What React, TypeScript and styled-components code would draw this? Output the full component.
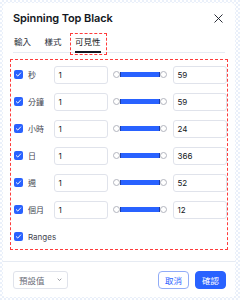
import styled, { createGlobalStyle } from 'styled-components';

const GlobalStyle = createGlobalStyle`
  html, body {
    margin: 0;
    padding: 0;
  }
  body {
    width: 240px;
    height: 300px;
    overflow: hidden;
    font-family: Inter, "Noto Sans CJK TC", sans-serif;
    color: #131722;
    background-color: #ffffff;
    background-image: repeating-conic-gradient(#eaf0fa 0 25%, #ffffff 0 50%);
    background-size: 4px 4px;
  }
`;

const Page = styled.div`
  padding: 3px;
`;

const Dialog = styled.div`
  width: 232px;
  height: 294px;
  background: #ffffff;
  border-radius: 4px;
  display: flex;
  flex-direction: column;
`;

const Header = styled.div`
  height: 30px;
  padding: 0 12px 0 10px;
  display: flex;
  align-items: center;
  justify-content: space-between;
`;

const Title = styled.span`
  font-size: 11px;
  font-weight: 600;
  letter-spacing: -0.1px;
`;

const CloseButton = styled.div`
  display: flex;
  align-items: center;
  & > svg {
    width: 9px;
    height: 9px;
  }
`;

const TabBar = styled.div`
  height: 19px;
  margin: 0 10px;
  padding-left: 1px;
  display: flex;
  gap: 13.5px;
  border-bottom: 1px solid #e6ebf3;
`;

const Tab = styled.div<{ $active?: boolean }>`
  position: relative;
  font-size: 8.5px;
  line-height: 19px;
  padding-bottom: 1px;
  color: ${(p) => (p.$active ? '#131722' : '#2a2e39')};
  border-bottom: 2px solid ${(p) => (p.$active ? '#131722' : 'transparent')};
  margin-bottom: -1px;
  ${(p) =>
    p.$active &&
    `
    &::after {
      content: '';
      position: absolute;
      left: -5px;
      right: -6px;
      top: 0;
      bottom: -4px;
      border: 1.5px dashed #ff3b3b;
    }
  `}
`;

const Content = styled.div`
  margin: 6px 0 0 7px;
  width: 218px;
  height: 191px;
  box-sizing: border-box;
  border: 1.5px dashed #ff3b3b;
  padding: 5.5px 1.5px 0 2.5px;
  display: flex;
  flex-direction: column;
  gap: 9px;
`;

const Row = styled.div`
  display: grid;
  grid-template-columns: 9px 20px 54px 54px 54px;
  column-gap: 5.5px;
  align-items: center;
  height: 18px;
`;

const CheckBox = styled.div`
  width: 9px;
  height: 9px;
  border-radius: 2px;
  background: #2962ff;
  display: flex;
  align-items: center;
  justify-content: center;
  & > svg {
    width: 7px;
    height: 7px;
  }
`;

const Label = styled.span<{ $wide?: boolean }>`
  font-size: 8px;
  color: #434651;
  white-space: nowrap;
  ${(p) => p.$wide && 'grid-column: 2 / 4;'}
`;

const NumberBox = styled.div`
  height: 18px;
  box-sizing: border-box;
  border: 1px solid #e0e3eb;
  border-radius: 3px;
  padding-left: 4px;
  font-size: 8px;
  display: flex;
  align-items: center;
`;

const Slider = styled.div`
  display: flex;
  align-items: center;
`;

const Thumb = styled.div`
  width: 7px;
  height: 7px;
  box-sizing: border-box;
  border-radius: 50%;
  background: #ffffff;
  border: 1px solid #b2b5be;
  flex-shrink: 0;
`;

const Track = styled.div`
  flex: 1;
  height: 5px;
  background: #2962ff;
  border-left: 1px solid #1e3ea8;
  border-right: 1px solid #1e3ea8;
`;

const Footer = styled.div`
  margin-top: auto;
  border-top: 1px solid #e6ebf3;
  height: 35px;
  padding: 0 9px 0 10px;
  display: flex;
  align-items: center;
  justify-content: space-between;
`;

const Select = styled.div`
  width: 55px;
  height: 18px;
  box-sizing: border-box;
  border: 1px solid #e0e3eb;
  border-radius: 3px;
  padding: 0 5px;
  font-size: 8.5px;
  color: #6a6d78;
  display: flex;
  align-items: center;
  justify-content: space-between;
  & > svg {
    width: 5px;
    height: 5px;
  }
`;

const Buttons = styled.div`
  display: flex;
  gap: 6px;
`;

const Button = styled.div<{ $primary?: boolean }>`
  width: 31px;
  height: 18px;
  box-sizing: border-box;
  border-radius: 4px;
  font-size: 8.5px;
  display: flex;
  align-items: center;
  justify-content: center;
  border: 1px solid ${(p) => (p.$primary ? '#2962ff' : '#91acf7')};
  background: ${(p) => (p.$primary ? '#2962ff' : '#ffffff')};
  color: ${(p) => (p.$primary ? '#ffffff' : '#2962ff')};
`;

const rows = [
  { label: '秒', min: 1, max: 59 },
  { label: '分鐘', min: 1, max: 59 },
  { label: '小時', min: 1, max: 24 },
  { label: '日', min: 1, max: 366 },
  { label: '週', min: 1, max: 52 },
  { label: '個月', min: 1, max: 12 },
];

const Check = () => (
  <CheckBox>
    <svg viewBox="0 0 8 8" fill="none">
      <path d="M1.5 4.2 L3.2 5.8 L6.5 2.2" stroke="#fff" strokeWidth="1.1" strokeLinecap="round" strokeLinejoin="round" />
    </svg>
  </CheckBox>
);

export default function App() {
  return (
    <>
      <GlobalStyle />
      <Page>
        <Dialog>
          <Header>
            <Title>Spinning Top Black</Title>
            <CloseButton>
              <svg viewBox="0 0 9 9" fill="none">
                <path d="M0.5 0.5 L8.5 8.5 M8.5 0.5 L0.5 8.5" stroke="#131722" strokeWidth="0.9" />
              </svg>
            </CloseButton>
          </Header>
          <TabBar>
            <Tab>輸入</Tab>
            <Tab>樣式</Tab>
            <Tab $active>可見性</Tab>
          </TabBar>
          <Content>
            {rows.map((r) => (
              <Row key={r.label}>
                <Check />
                <Label>{r.label}</Label>
                <NumberBox>{r.min}</NumberBox>
                <Slider>
                  <Thumb />
                  <Track />
                  <Thumb />
                </Slider>
                <NumberBox>{r.max}</NumberBox>
              </Row>
            ))}
            <Row>
              <Check />
              <Label $wide>Ranges</Label>
            </Row>
          </Content>
          <Footer>
            <Select>
              預設值
              <svg viewBox="0 0 6 6" fill="none">
                <path d="M0.8 2 L3 4.2 L5.2 2" stroke="#6a6d78" strokeWidth="0.8" />
              </svg>
            </Select>
            <Buttons>
              <Button>取消</Button>
              <Button $primary>確認</Button>
            </Buttons>
          </Footer>
        </Dialog>
      </Page>
    </>
  );
}
